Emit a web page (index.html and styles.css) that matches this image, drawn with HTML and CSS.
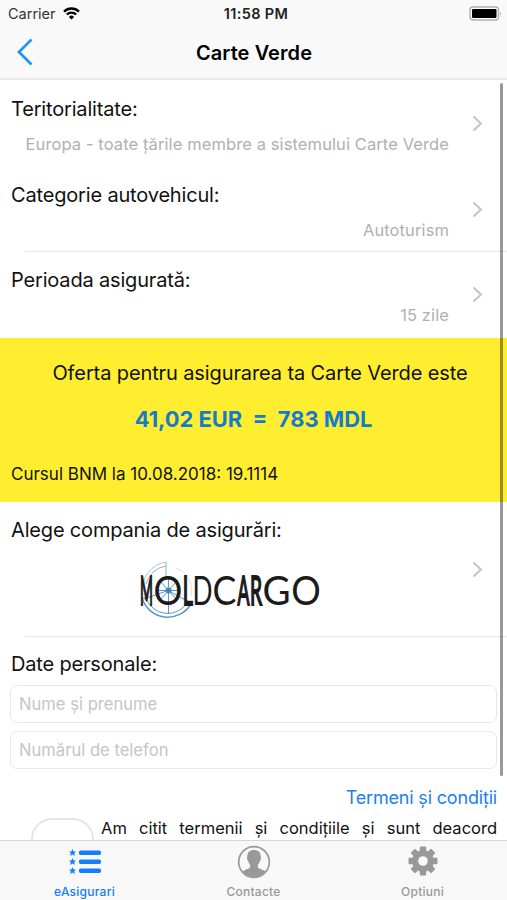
FILE: index.html
```html
<!DOCTYPE html>
<html lang="ro">
<head>
  <meta charset="UTF-8" />
  <meta name="viewport" content="width=device-width, initial-scale=1.0"/>
  <title>Carte Verde</title>
  <link rel="stylesheet" href="styles.css">
</head>
<body>

<div class="app">
  <!-- STATUS BAR + NAV -->
  <header class="header">
    <div class="status-bar">
      <div class="carrier">
        <span class="carrier-name">Carrier</span>
        <svg width="17" height="13" viewBox="0 0 17 13" fill="none" stroke="#000" stroke-width="2.3">
          <path d="M1 4.6a10.6 10.6 0 0 1 15 0"/>
          <path d="M3.8 7.5a6.6 6.6 0 0 1 9.4 0"/>
          <path d="M8.5 12.6L5.9 9.9a3.7 3.7 0 0 1 5.2 0z" fill="#000" stroke="none"/>
        </svg>
      </div>
      <span class="time">11:58 PM</span>
      <svg class="battery" width="33" height="15" viewBox="0 0 33 15">
        <rect x="1" y="1" width="28.5" height="13" rx="3" fill="#fff" stroke="#b0b0b0" stroke-width="1.4"/>
        <rect x="3" y="3" width="24.5" height="9" rx="1.2" fill="#000"/>
        <path d="M31 5.5q1.6 2 0 4z" fill="#aaa"/>
      </svg>
    </div>
    <div class="nav-bar">
      <svg class="back" width="16" height="28" viewBox="0 0 16 28" fill="none" stroke="#2196f3" stroke-width="2.8">
        <path d="M14.5 1.5L2 14l12.5 12.5"/>
      </svg>
      <h1 class="title">Carte Verde</h1>
    </div>
  </header>

  <!-- FORM -->
  <main class="content">
    <div class="row">
      <div class="row-label">Teritorialitate:</div>
      <div class="row-value">Europa - toate țările membre a sistemului Carte Verde</div>
      <svg class="chevron" width="11" height="17" viewBox="0 0 11 17"><path d="M1.5 1.5l7.5 7-7.5 7"/></svg>
    </div>
    <div class="row row-line">
      <div class="row-label">Categorie autovehicul:</div>
      <div class="row-value">Autoturism</div>
      <svg class="chevron" width="11" height="17" viewBox="0 0 11 17"><path d="M1.5 1.5l7.5 7-7.5 7"/></svg>
    </div>
    <div class="row row-period">
      <div class="row-label">Perioada asigurată:</div>
      <div class="row-value">15 zile</div>
      <svg class="chevron" width="11" height="17" viewBox="0 0 11 17"><path d="M1.5 1.5l7.5 7-7.5 7"/></svg>
    </div>

    <section class="offer">
      <p class="offer-text">Oferta pentru asigurarea ta Carte Verde este</p>
      <p class="offer-price">41,02 EUR&nbsp; =&nbsp; 783 MDL</p>
      <p class="offer-rate">Cursul BNM la 10.08.2018: 19.1114</p>
    </section>

    <div class="row row-company row-line">
      <div class="row-label">Alege compania de asigurări:</div>
      <svg class="logo" width="190" height="62" viewBox="-3 0 190 62">
        <g fill="none" stroke="#5b96c8">
          <path d="M28 2A28 28 0 0 0 5 24" stroke="#a9c6d3"/>
          <path d="M28 6A24 24 0 0 0 8 24M28 2v18" stroke="#8fb3c8"/>
          <path d="M4 38A27 27 0 0 0 53 44" stroke-width="1.5"/>
          <path d="M8 38A23 23 0 0 0 49 43M4 38l4 0"/>
          <path d="M30.5 18v36M18 30.5h24M22 21l17 19M39 21L22 40M6 39l24-8.5 24 13"/>
          <path d="M38 8a24 24 0 0 1 15 28" stroke="#dde2e4"/>
          <circle cx="30.5" cy="30.5" r="2.8" fill="#3d83c4"/>
        </g>
        <!-- wordmark mixes narrow and wide letters -->
        <g class="logo-text">
          <text class="thin" transform="translate(2 44.5) scale(.34 1)">M</text>
          <text transform="translate(15.5 44.5) scale(.88 1)">O</text>
          <text class="thin" transform="translate(44.7 44.5) scale(.48 1)">L</text>
          <text transform="translate(54.5 44.5) scale(.64 1)">D</text>
          <text transform="translate(74.5 44.5) scale(.87 1)">C</text>
          <text class="thin" transform="translate(99.5 44.5) scale(.43 1)">A</text>
          <text class="thin" transform="translate(112 44.5) scale(.47 1)">R</text>
          <text transform="translate(124.5 44.5) scale(.94 1)">G</text>
          <text transform="translate(153.2 44.5) scale(.9 1)">O</text>
        </g>
      </svg>
      <svg class="chevron" width="11" height="17" viewBox="0 0 11 17"><path d="M1.5 1.5l7.5 7-7.5 7"/></svg>
    </div>

    <section class="personal">
      <div class="row-label">Date personale:</div>
      <input type="text" class="field" placeholder="Nume și prenume" />
      <input type="text" class="field" placeholder="Numărul de telefon" />
      <a class="terms">Termeni și condiții</a>
      <div class="agree">
        <span class="switch"></span>
        <p class="agree-text">Am citit termenii și condițiile și sunt deacord</p>
      </div>
    </section>

    <div class="scrollbar"></div>
  </main>

  <!-- TAB BAR -->
  <nav class="tabs">
    <div class="tab active">
      <svg width="34" height="34" viewBox="0 0 34 34" fill="currentColor">
        <defs>
          <path id="star" d="M0-3.7L1.1-1.3 3.5-1.2 1.7.5 2.3 3.2 0 1.8-2.3 3.2-1.7.5-3.5-1.2-1.1-1.3z"/>
        </defs>
        <use href="#star" x="4.5" y="7.7"/>
        <use href="#star" x="4.5" y="16.7"/>
        <use href="#star" x="4.5" y="25.7"/>
        <rect x="11" y="5.5" width="22" height="4.4" rx="1.6"/>
        <rect x="11" y="14.5" width="22" height="4.4" rx="1.6"/>
        <rect x="11" y="23.5" width="22" height="4.4" rx="1.6"/>
      </svg>
      <span>eAsigurari</span>
    </div>
    <div class="tab">
      <svg width="34" height="34" viewBox="0 0 34 34">
        <circle cx="17" cy="17" r="15.3" fill="none" stroke="currentColor" stroke-width="1.7"/>
        <path fill="currentColor" d="M17 5c4.6 0 7 2.7 6.7 7 .8.6.3 3-.8 3.8-.3 1.8-1 3-2 4v2.4c1 2 5.6 2.2 7.3 4.2A15 15 0 0 1 17 32 15 15 0 0 1 5.800 26.400c1.700-2 6.300-2.200 7.300-4.200v-2.400c-1-1-1.700-2.200-2-4-1.100-.8-1.600-3.200-.8-3.800C10 7.700 12.400 5 17 5z"/>
      </svg>
      <span>Contacte</span>
    </div>
    <div class="tab">
      <svg width="34" height="34" viewBox="-17 -16 34 34">
        <g fill="currentColor">
          <rect id="tooth" x="-3.2" y="-14.5" width="6.4" height="29" rx="1"/>
          <use href="#tooth" transform="rotate(45)"/>
          <use href="#tooth" transform="rotate(90)"/>
          <use href="#tooth" transform="rotate(135)"/>
          <circle r="10.8"/>
        </g>
        <circle r="4.8" fill="#f8f8f8"/>
      </svg>
      <span>Optiuni</span>
    </div>
  </nav>
</div>

</body>
</html>
```

FILE: styles.css
```css
* {
  box-sizing: border-box;
  font-family: Inter, 'Liberation Sans', sans-serif;
}

body {
  margin: 0;
  background: #fff;
  color: #111;
}

p, h1 {
  margin: 0;
}

.app {
  display: flex;
  flex-direction: column;
  height: 900px;
  overflow: hidden;
}

.header {
  flex: none;
  height: 80px;
  background: #f9f9f9;
  border-bottom: 2px solid #e9e9e9;
}

.status-bar {
  display: grid;
  grid-template-columns: 1fr auto 1fr;
  align-items: center;
  height: 27px;
  padding: 0 5px 0 8px;
}

.carrier {
  display: flex;
  align-items: center;
  gap: 7px;
}

.carrier-name {
  font-size: 14.5px;
  color: #333;
}

.time {
  margin-left: 2px;
  font-size: 14.5px;
  font-weight: 600;
  letter-spacing: 0.35px;
  color: #222;
}

.battery {
  justify-self: end;
}

.nav-bar {
  display: grid;
  grid-template-columns: 40px 1fr 40px;
  align-items: center;
  height: 51px;
}

.back {
  margin: -1px 0 0 17px;
}

.title {
  padding-left: 1px;
  text-align: center;
  font-size: 20px;
  font-weight: 600;
  line-height: 24px;
  letter-spacing: 0.08px;
  color: #000;
}

.content {
  position: relative;
  flex: 1;
  min-height: 0;
  overflow: hidden;
}

.row {
  display: grid;
  grid-template-columns: 1fr 11px;
  grid-template-rows: 35px 1fr;
  column-gap: 23px;
  height: 86px;
  padding: 12px 24px 0 11px;
}

.row-label {
  font-size: 20px;
  line-height: 35px;
  letter-spacing: -0.17px;
}

.row-value {
  grid-row: 2;
  text-align: right;
  font-size: 16.5px;
  line-height: 34px;
  letter-spacing: 0.1px;
  color: #b0b0b0;
  white-space: nowrap;
}

.chevron {
  grid-column: 2;
  grid-row: 1 / 3;
  align-self: center;
  margin-bottom: 12px;
  fill: none;
  stroke: #c4c4c6;
  stroke-width: 2;
}

.row-period {
  padding-top: 11px;
}

.row-line {
  background: linear-gradient(#e5e5e5, #e5e5e5) 25px 100% / 100% 1px no-repeat;
}

.offer {
  height: 164px;
  padding: 19px 11px 0;
  background: #ffee2f;
}

.offer-text {
  padding-left: 13px;
  text-align: center;
  font-size: 20px;
  line-height: 32px;
  letter-spacing: -0.11px;
}

.offer-price {
  margin-top: 14px;
  text-align: center;
  font-size: 21.9px;
  font-weight: 700;
  line-height: 32px;
  color: #147bcd;
}

.offer-rate {
  margin-top: 26px;
  font-size: 17px;
  line-height: 26px;
}

.row-company {
  height: 135px;
  padding-top: 11px;
}

.logo {
  grid-row: 2;
  justify-self: center;
  margin-top: 12px;
}

.row-company .chevron {
  margin-bottom: 11px;
}

.logo-text text {
  font-family: Lato, sans-serif;
  font-size: 41px;
  fill: #1b1b1b;
}

.logo-text .thin {
  stroke: #1b1b1b;
  stroke-width: 2px;
}

.personal {
  display: flex;
  flex-direction: column;
  padding: 10px 10px 0;
}

.personal .row-label {
  padding-left: 1px;
}

.field {
  height: 38px;
  margin: 4px 0;
  padding: 0 8px;
  border: 1.5px solid #e8e8e8;
  border-radius: 7px;
  outline: none;
  font-size: 16.6px;
}

.row-label + .field {
  margin-top: 3px;
}

.field::placeholder {
  color: #c5c5c9;
}

.terms {
  align-self: flex-end;
  margin-top: 12px;
  font-size: 18px;
  line-height: 26px;
  letter-spacing: -0.18px;
  color: #1b80f3;
}

.agree {
  display: flex;
  padding-left: 21px;
  margin-top: 4px;
}

.switch {
  flex: none;
  width: 63px;
  height: 42px;
  margin-top: 3px;
  border: 2px solid #e5e5e5;
  border-radius: 21px;
}

.agree-text {
  flex: 1;
  margin-left: 7px;
  font-size: 16.5px;
  line-height: 26px;
  text-align: justify;
  text-align-last: justify;
}

/* scroll indicator lies over the rows */
.scrollbar {
  position: absolute;
  top: 3px;
  right: 4px;
  width: 3px;
  height: 693px;
  border-radius: 2px;
  background: rgba(0, 0, 0, 0.4);
}

.tabs {
  flex: none;
  display: grid;
  grid-template-columns: repeat(3, 1fr);
  height: 60px;
  border-top: 1px solid #d5d5d5;
  background: #f8f8f8;
}

.tab {
  display: flex;
  flex-direction: column;
  align-items: center;
  padding-top: 4px;
  font-size: 12px;
  font-weight: 500;
  line-height: 15px;
  letter-spacing: 0.25px;
  color: #999;
}

.tab span {
  margin-top: 5px;
}

.tab.active {
  color: #147efb;
}
```
